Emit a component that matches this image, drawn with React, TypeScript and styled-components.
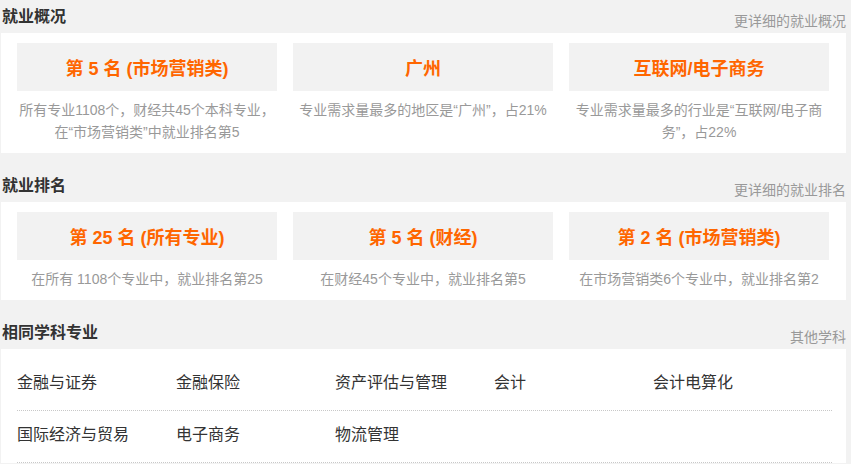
import React from 'react';
import styled, { createGlobalStyle } from 'styled-components';

const GlobalStyle = createGlobalStyle`
    * {
        box-sizing: border-box;
    }

    body {
        margin: 0;
        background-color: #f2f2f2;
        font-family: "Liberation Sans", "Noto Sans CJK SC", sans-serif;
        color: #333;
    }
`;

interface StatCard {
    title: string;
    desc: string;
}

const overview: StatCard[] = [
    { title: '第 5 名 (市场营销类)', desc: '所有专业1108个，财经共45个本科专业，在“市场营销类”中就业排名第5' },
    { title: '广州', desc: '专业需求量最多的地区是“广州”，占21%' },
    { title: '互联网/电子商务', desc: '专业需求量最多的行业是“互联网/电子商务”，占22%' },
];

const ranking: StatCard[] = [
    { title: '第 25 名 (所有专业)', desc: '在所有 1108个专业中，就业排名第25' },
    { title: '第 5 名 (财经)', desc: '在财经45个专业中，就业排名第5' },
    { title: '第 2 名 (市场营销类)', desc: '在市场营销类6个专业中，就业排名第2' },
];

const majors: string[][] = [
    ['金融与证券', '金融保险', '资产评估与管理', '会计', '会计电算化'],
    ['国际经济与贸易', '电子商务', '物流管理'],
];

const Page = styled.div`
    width: 851px;
    padding: 0 5px 0 1px;
`;

const Section = styled.section`
    & + & {
        margin-top: 16px;
    }
`;

const Header = styled.div`
    display: flex;
    justify-content: space-between;
    align-items: flex-end;
    height: 33px;
    padding: 0 0 4px 1px;
`;

const Title = styled.h2`
    margin: 0;
    font-size: 16px;
    line-height: 24px;
    font-weight: 700;
    color: #333;
`;

const MoreLink = styled.a`
    font-size: 14px;
    line-height: 16px;
    color: #999;
    text-decoration: none;
    cursor: pointer;
`;

const Panel = styled.div`
    background-color: #fff;
    padding: 10px 17px 10px 16px;
`;

const CardGrid = styled.div`
    display: grid;
    grid-template-columns: repeat(3, 260px);
    column-gap: 16px;
`;

const CardTitle = styled.div`
    display: flex;
    align-items: center;
    justify-content: center;
    height: 48px;
    background-color: #f2f2f2;
    color: #ff6600;
    font-size: 18px;
    font-weight: 700;
`;

const CardDesc = styled.p`
    margin: 8px 0 0;
    padding: 0 2px;
    font-size: 14px;
    line-height: 22px;
    color: #999;
    text-align: center;
`;

const MajorPanel = styled.div`
    background-color: #fff;
    padding: 10px 0 0 16px;
`;

const MajorRow = styled.div`
    display: grid;
    grid-template-columns: repeat(5, 159px);
    width: 815px;
    padding: 14px 0 17px;
    border-bottom: 1px dotted #c8c8c8;
`;

const MajorItem = styled.a`
    font-size: 16px;
    line-height: 20px;
    color: #333;
    text-decoration: none;
    cursor: pointer;
`;

const StatSection: React.FC<{ title: string; more: string; cards: StatCard[] }> = ({ title, more, cards }) => (
    <Section>
        <Header>
            <Title>{title}</Title>
            <MoreLink>{more}</MoreLink>
        </Header>
        <Panel>
            <CardGrid>
                {cards.map(card => (
                    <div key={card.title}>
                        <CardTitle>{card.title}</CardTitle>
                        <CardDesc>{card.desc}</CardDesc>
                    </div>
                ))}
            </CardGrid>
        </Panel>
    </Section>
);

export default function App() {
    return (
        <>
            <GlobalStyle />
            <Page>
                <StatSection title="就业概况" more="更详细的就业概况" cards={overview} />
                <StatSection title="就业排名" more="更详细的就业排名" cards={ranking} />
                <Section>
                    <Header>
                        <Title>相同学科专业</Title>
                        <MoreLink>其他学科</MoreLink>
                    </Header>
                    <MajorPanel>
                        {majors.map((row, i) => (
                            <MajorRow key={i}>
                                {row.map(name => (
                                    <MajorItem key={name}>{name}</MajorItem>
                                ))}
                            </MajorRow>
                        ))}
                    </MajorPanel>
                </Section>
            </Page>
        </>
    );
}
